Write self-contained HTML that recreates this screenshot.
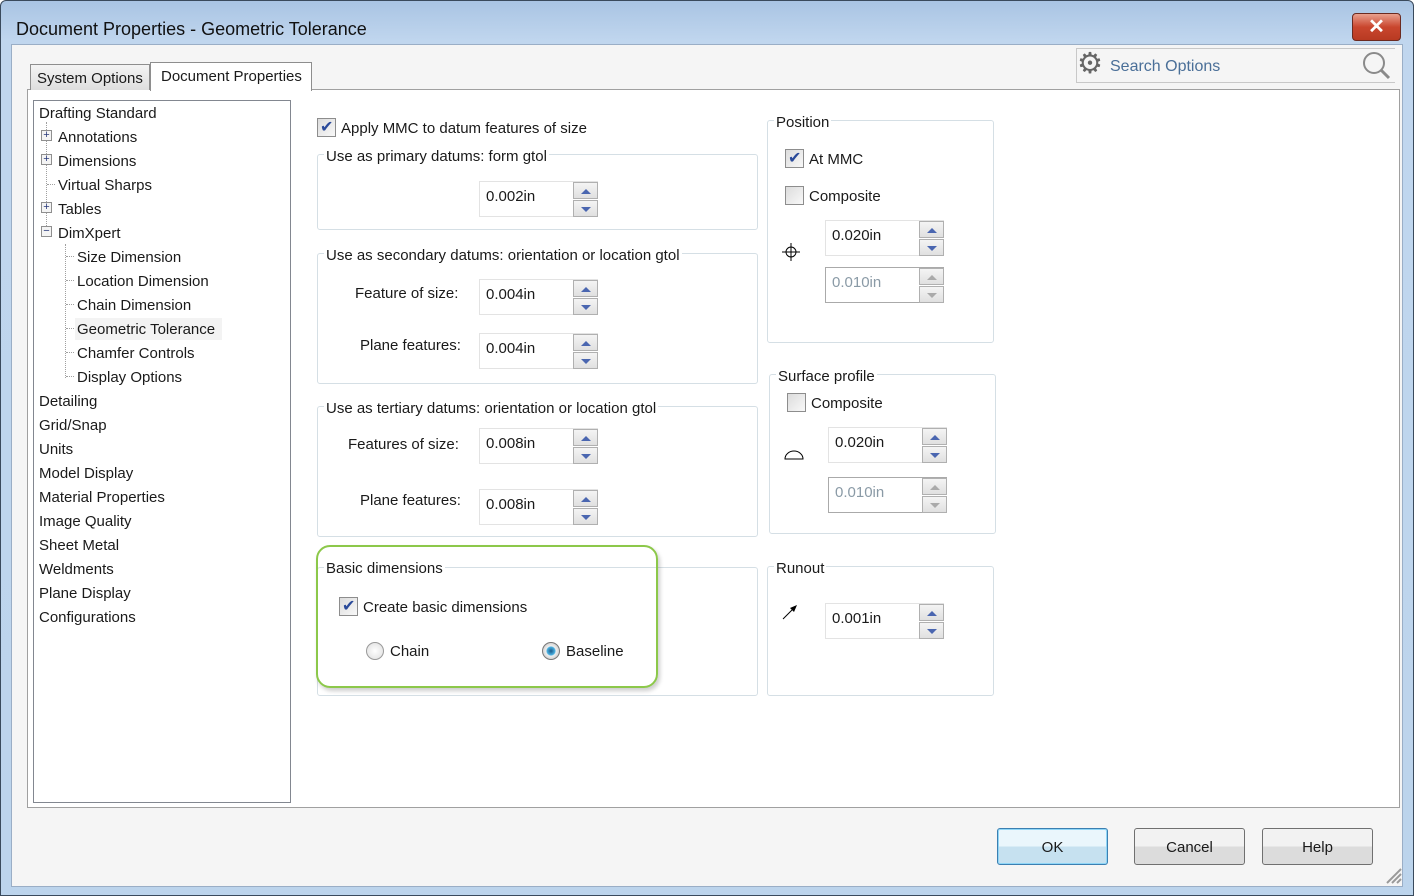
<!DOCTYPE html>
<html><head><meta charset="utf-8"><style>
*{box-sizing:border-box;margin:0;padding:0}
body{width:1414px;height:896px;overflow:hidden;background:#fff;font-family:"Liberation Sans",sans-serif;font-size:15px;color:#1a1a1a;position:relative}
.a{position:absolute}
.frame{left:0;top:0;width:1414px;height:896px;background:linear-gradient(#a9c4e3,#c0d6ee 40px,#bcd4ec);border:1px solid #3a4a5c;border-radius:6px 6px 0 0}
.client{left:11px;top:44px;width:1392px;height:843px;background:#f5f5f5;border:1px solid #9aaec6}
.panel{left:27px;top:89px;width:1373px;height:719px;background:#fff;border:1px solid #a0a0a0}
.tree{left:33px;top:100px;width:258px;height:703px;border:1px solid #828790;background:#fff}
.t{position:absolute;white-space:nowrap;font-size:15px;margin-top:2px}
.grp{position:absolute;border:1px solid #d5dfe5;border-radius:3px}
.gl{position:absolute;background:#fff;padding:0 2px;white-space:nowrap;margin-top:2px}
.spin{position:absolute;width:119px;height:36px;border:1px solid #e3e3e3;border-right:none;background:#fff}
.spin span{position:absolute;left:6px;top:6px}
.sb{position:absolute;right:0;width:25px;height:17px;border:1px solid #b0b0b0;background:linear-gradient(#f4f4f4,#e0e0e0)}
.sb.u{top:0}.sb.d{top:18px}
.sb:after{content:"";position:absolute;left:7px;top:6px;border-left:5px solid transparent;border-right:5px solid transparent}
.sb.u:after{border-bottom:5px solid #4a66b0}
.sb.d:after{border-top:5px solid #4a66b0}
.dis span{color:#8a9aa6}.dis .sb:after{border-bottom-color:#aaa;border-top-color:#aaa}
.cb{position:absolute;width:19px;height:19px;border:1px solid #8d8d8d;background:linear-gradient(135deg,#dcdcdc,#f8f8f8)}
.ck:after{content:"✔";position:absolute;left:2px;top:-2px;color:#2a4a9a;font-size:16px}
.btn{position:absolute;width:111px;height:37px;border:1px solid #707070;border-radius:3px;background:linear-gradient(#f2f2f2 50%,#dcdcdc 50%);text-align:center;line-height:37px}
.plus{position:absolute;width:11px;height:11px;border:1px solid #8f8f8f;background:#f4f4f4;font-size:11px;line-height:9px;text-align:center;color:#2a3a7a}
.dot{position:absolute;border-left:1px dotted #a0a0a0}
.doth{position:absolute;border-top:1px dotted #a0a0a0;height:0}
</style></head><body>
<div class="a frame"></div>
<div class="a" style="left:16px;top:19px;font-size:18px;color:#111">Document Properties - Geometric Tolerance</div>
<div class="a" style="left:1352px;top:13px;width:49px;height:28px;border:1px solid #6b2a20;border-radius:4px;background:linear-gradient(#e9a08e,#c9462e 50%,#b83a22);color:#fff;font-size:20px;font-weight:bold;text-align:center;line-height:26px">✕</div>
<div class="a client"></div>
<div class="a" style="left:1076px;top:48px;width:319px;height:35px;border-top:1px solid #c8c8c8;border-left:1px solid #c8c8c8;border-bottom:1px solid #c8c8c8"></div>
<div class="a" style="left:1077px;top:46px;font-size:29px;color:#666">⚙</div>
<div class="a" style="left:1110px;top:58px;color:#4a6f98;font-size:16px">Search Options</div>
<svg class="a" style="left:1360px;top:51px" width="32" height="30"><circle cx="14" cy="12" r="10" fill="none" stroke="#8a8a8a" stroke-width="2"/><line x1="21" y1="19" x2="29" y2="27" stroke="#8a8a8a" stroke-width="3"/></svg>
<div class="a panel"></div>
<div class="a" style="left:30px;top:64px;width:120px;height:26px;border:1px solid #8e8e8e;border-bottom:none;background:linear-gradient(#f4f4f4,#dedede)"></div>
<div class="a" style="left:37px;top:70px">System Options</div>
<div class="a" style="left:150px;top:62px;width:162px;height:29px;border:1px solid #8e8e8e;border-bottom:none;background:#fff"></div>
<div class="a" style="left:161px;top:68px">Document Properties</div>
<div class="a tree"></div>
<div class="dot" style="left:46px;top:122px;height:112px"></div>
<div class="dot" style="left:65px;top:244px;height:134px"></div>
<div class="t" style="left:39px;top:103px">Drafting Standard</div>
<div class="plus" style="left:41px;top:130px">+</div><div class="t" style="left:58px;top:127px">Annotations</div>
<div class="plus" style="left:41px;top:154px">+</div><div class="t" style="left:58px;top:151px">Dimensions</div>
<div class="doth" style="left:47px;top:184px;width:8px"></div><div class="t" style="left:58px;top:175px">Virtual Sharps</div>
<div class="plus" style="left:41px;top:202px">+</div><div class="t" style="left:58px;top:199px">Tables</div>
<div class="plus" style="left:41px;top:226px">−</div><div class="t" style="left:58px;top:223px">DimXpert</div>
<div class="doth" style="left:66px;top:256px;width:8px"></div><div class="t" style="left:77px;top:247px">Size Dimension</div>
<div class="doth" style="left:66px;top:280px;width:8px"></div><div class="t" style="left:77px;top:271px">Location Dimension</div>
<div class="doth" style="left:66px;top:304px;width:8px"></div><div class="t" style="left:77px;top:295px">Chain Dimension</div>
<div class="a" style="left:75px;top:318px;width:147px;height:22px;background:#f3f3f3"></div>
<div class="doth" style="left:66px;top:328px;width:8px"></div><div class="t" style="left:77px;top:319px">Geometric Tolerance</div>
<div class="doth" style="left:66px;top:352px;width:8px"></div><div class="t" style="left:77px;top:343px">Chamfer Controls</div>
<div class="doth" style="left:66px;top:376px;width:8px"></div><div class="t" style="left:77px;top:367px">Display Options</div>
<div class="t" style="left:39px;top:391px">Detailing</div>
<div class="t" style="left:39px;top:415px">Grid/Snap</div>
<div class="t" style="left:39px;top:439px">Units</div>
<div class="t" style="left:39px;top:463px">Model Display</div>
<div class="t" style="left:39px;top:487px">Material Properties</div>
<div class="t" style="left:39px;top:511px">Image Quality</div>
<div class="t" style="left:39px;top:535px">Sheet Metal</div>
<div class="t" style="left:39px;top:559px">Weldments</div>
<div class="t" style="left:39px;top:583px">Plane Display</div>
<div class="t" style="left:39px;top:607px">Configurations</div>
<div class="cb ck" style="left:317px;top:118px"></div><div class="t" style="left:341px;top:118px">Apply MMC to datum features of size</div>
<div class="grp" style="left:317px;top:154px;width:441px;height:76px"></div>
<div class="gl" style="left:324px;top:146px">Use as primary datums: form gtol</div>
<div class="spin" style="left:479px;top:181px"><span>0.002in</span><div class="sb u"></div><div class="sb d"></div></div>
<div class="grp" style="left:317px;top:253px;width:441px;height:131px"></div>
<div class="gl" style="left:324px;top:245px">Use as secondary datums: orientation or location gtol</div>
<div class="t" style="left:355px;top:283px">Feature of size:</div>
<div class="spin" style="left:479px;top:279px"><span>0.004in</span><div class="sb u"></div><div class="sb d"></div></div>
<div class="t" style="left:360px;top:335px">Plane features:</div>
<div class="spin" style="left:479px;top:333px"><span>0.004in</span><div class="sb u"></div><div class="sb d"></div></div>
<div class="grp" style="left:317px;top:406px;width:441px;height:131px"></div>
<div class="gl" style="left:324px;top:398px">Use as tertiary datums: orientation or location gtol</div>
<div class="t" style="left:348px;top:434px">Features of size:</div>
<div class="spin" style="left:479px;top:428px"><span>0.008in</span><div class="sb u"></div><div class="sb d"></div></div>
<div class="t" style="left:360px;top:490px">Plane features:</div>
<div class="spin" style="left:479px;top:489px"><span>0.008in</span><div class="sb u"></div><div class="sb d"></div></div>
<div class="grp" style="left:317px;top:567px;width:441px;height:129px"></div>
<div class="a" style="left:316px;top:545px;width:342px;height:143px;border:2px solid #8cc84a;border-radius:14px;box-shadow:2px 3px 4px rgba(0,0,0,.2)"></div>
<div class="gl" style="left:324px;top:558px">Basic dimensions</div>
<div class="cb ck" style="left:339px;top:597px"></div><div class="t" style="left:363px;top:597px">Create basic dimensions</div>
<div class="a" style="left:366px;top:642px;width:18px;height:18px;border-radius:50%;border:1px solid #999;background:radial-gradient(#fff,#ddd)"></div>
<div class="t" style="left:390px;top:641px">Chain</div>
<div class="a" style="left:542px;top:642px;width:18px;height:18px;border-radius:50%;border:1px solid #777;background:radial-gradient(circle,#1a5a8a 0,#4ab0e0 4px,#eee 5px,#ccc 9px)"></div>
<div class="t" style="left:566px;top:641px">Baseline</div>
<div class="grp" style="left:767px;top:120px;width:227px;height:223px"></div>
<div class="gl" style="left:774px;top:112px">Position</div>
<div class="cb ck" style="left:785px;top:149px"></div><div class="t" style="left:809px;top:149px">At MMC</div>
<div class="cb" style="left:785px;top:186px"></div><div class="t" style="left:809px;top:186px">Composite</div>
<svg class="a" style="left:781px;top:242px" width="20" height="20"><circle cx="10" cy="10" r="5" fill="none" stroke="#000"/><path d="M10 1V19M1 10H19" stroke="#000"/></svg>
<div class="spin" style="left:825px;top:220px"><span>0.020in</span><div class="sb u"></div><div class="sb d"></div></div>
<div class="spin dis" style="left:825px;top:267px;border-color:#aaa"><span>0.010in</span><div class="sb u"></div><div class="sb d"></div></div>
<div class="grp" style="left:769px;top:374px;width:227px;height:160px"></div>
<div class="gl" style="left:776px;top:366px">Surface profile</div>
<div class="cb" style="left:787px;top:393px"></div><div class="t" style="left:811px;top:393px">Composite</div>
<svg class="a" style="left:784px;top:449px" width="20" height="12"><path d="M1 10A9 8 0 0 1 19 10Z" fill="none" stroke="#000"/></svg>
<div class="spin" style="left:828px;top:427px"><span>0.020in</span><div class="sb u"></div><div class="sb d"></div></div>
<div class="spin dis" style="left:828px;top:477px;border-color:#aaa"><span>0.010in</span><div class="sb u"></div><div class="sb d"></div></div>
<div class="grp" style="left:767px;top:566px;width:227px;height:130px"></div>
<div class="gl" style="left:774px;top:558px">Runout</div>
<svg class="a" style="left:781px;top:603px" width="18" height="18"><path d="M2 16L14 4" stroke="#000"/><path d="M16 2L9 5L13 9Z" fill="#000"/></svg>
<div class="spin" style="left:825px;top:603px"><span>0.001in</span><div class="sb u"></div><div class="sb d"></div></div>
<div class="btn" style="left:997px;top:828px;border-color:#3c7fb1;background:linear-gradient(#eaf6fc 50%,#c6e1f0 50%);box-shadow:inset 0 0 0 1px #8fd6f7">OK</div>
<div class="btn" style="left:1134px;top:828px">Cancel</div>
<div class="btn" style="left:1262px;top:828px">Help</div>
<svg class="a" style="left:1384px;top:866px" width="18" height="18"><path d="M17 3L3 17M17 8L8 17M17 13L13 17" stroke="#999" stroke-width="2"/></svg>
</body></html>
